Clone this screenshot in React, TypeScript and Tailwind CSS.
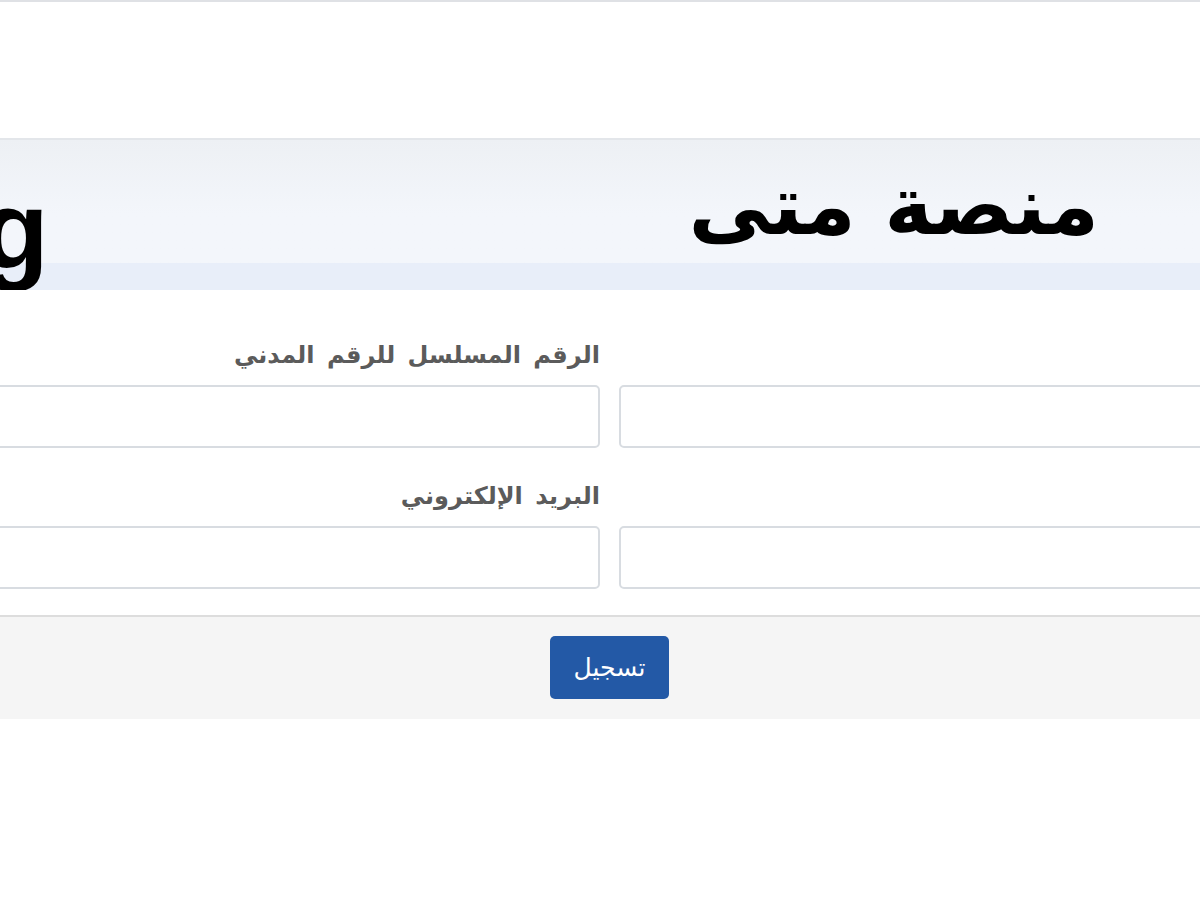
import React from "react";

export default function App() {
  return (
    <div className="w-[1200px] h-[900px] overflow-hidden bg-white relative" style={{ fontFamily: '"DejaVu Sans", sans-serif' }}>
      <div className="h-[2px] bg-[#dfe1e5]" />
      <div className="h-[136px]" />
      {/* header band */}
      <div className="h-[152px] relative overflow-hidden border-t-2 border-[#e3e6ea] bg-gradient-to-b from-[#edf0f4] via-[#f3f6fb] to-[#f3f6fb]">
        <div className="absolute left-0 right-0 bottom-0 h-[27px] bg-[#e8eef9]" />
        <span className="absolute left-[-88px] top-[21px] text-[112px] leading-[140px] font-bold text-black whitespace-nowrap" style={{ fontFamily: '"Liberation Sans", Arial, sans-serif' }}>
          ng
        </span>
        <div dir="rtl" className="absolute right-[101px] top-[-5px] text-[82px] leading-[140px] font-bold text-black whitespace-nowrap" style={{ fontFamily: '"DejaVu Serif", "DejaVu Sans", serif' }}>
          منصة متى
        </div>
      </div>
      {/* form */}
      <div dir="rtl" className="ml-[-20px] w-[1259px] pt-[48px]">
        <div className="flex gap-[19px]">
          <div className="w-[620px]">
            <div className="h-[47px]" />
            <div className="h-[63px] rounded-[5px] border-2 border-[#d8dce1] bg-white" />
          </div>
          <div className="w-[620px]">
            <label className="block h-[47px] text-[24px] font-bold text-[#5b5b5b] leading-[34px] [word-spacing:4px]">الرقم المسلسل للرقم المدني</label>
            <div className="h-[63px] rounded-[5px] border-2 border-[#d8dce1] bg-white" />
          </div>
        </div>
        <div className="flex gap-[19px] mt-[31px]">
          <div className="w-[620px]">
            <div className="h-[47px]" />
            <div className="h-[63px] rounded-[5px] border-2 border-[#d8dce1] bg-white" />
          </div>
          <div className="w-[620px]">
            <label className="block h-[47px] text-[24px] font-bold text-[#5b5b5b] leading-[34px] [word-spacing:4px]">البريد الإلكتروني</label>
            <div className="h-[63px] rounded-[5px] border-2 border-[#d8dce1] bg-white" />
          </div>
        </div>
      </div>
      {/* footer */}
      <div className="mt-[26px] h-[104px] border-t-2 border-[#dddddd] bg-[#f5f5f5] flex justify-center pt-[19px]">
        <button className="ml-[19px] w-[119px] h-[63px] rounded-[5px] bg-[#2359a6] text-white text-[25px] leading-none">تسجيل</button>
      </div>
    </div>
  );
}
